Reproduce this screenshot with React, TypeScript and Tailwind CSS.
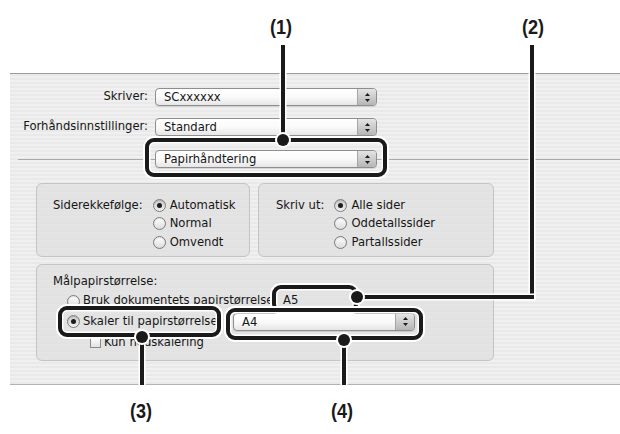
import React from "react";

const Arrows = () => (
  <svg width="7" height="11" viewBox="0 0 7 11">
    <path d="M3.5 1 L6 4 L1 4 Z" fill="#1a1a1a" />
    <path d="M1 7 L6 7 L3.5 10 Z" fill="#1a1a1a" />
  </svg>
);

const Popup = ({ label, className }: { label: string; className: string }) => (
  <div
    className={`flex h-[18px] overflow-hidden rounded-[4px] border border-[#8e8e8e] bg-gradient-to-b from-white via-[#fafafa] to-[#e6e6e6] shadow-[0_1px_0_rgba(0,0,0,0.1)] ${className}`}
  >
    <span className="flex-1 pl-[8px] leading-[16px]">{label}</span>
    <span className="flex w-[19px] items-center justify-center border-l border-[#a6a6a6] bg-gradient-to-b from-[#e4e4e4] to-[#b6b6b6]">
      <Arrows />
    </span>
  </div>
);

const Radio = ({ on = false }: { on?: boolean }) => (
  <span
    className={`flex h-[13px] w-[13px] shrink-0 items-center justify-center rounded-full border border-[#7c7c7c] shadow-[inset_0_1px_1px_rgba(0,0,0,0.12)] ${
      on ? "bg-gradient-to-b from-[#c9c9c9] to-[#f2f2f2]" : "bg-gradient-to-b from-white to-[#dcdcdc]"
    }`}
  >
    {on && <span className="h-[5px] w-[5px] rounded-full bg-[#1c1c1c]" />}
  </span>
);

const Option = ({ label, on }: { label: string; on?: boolean }) => (
  <div className="flex h-[18.5px] items-center gap-[4px]">
    <Radio on={on} />
    <span>{label}</span>
  </div>
);

const Callout = ({ className }: { className: string }) => (
  <div
    className={`absolute rounded-[9px] border-[4px] border-[#1a1a1a] shadow-[0_0_0_2px_#fff,inset_0_0_0_1.5px_#fff] ${className}`}
  />
);

const Line = ({ className }: { className: string }) => (
  <div className={`absolute bg-[#1a1a1a] shadow-[0_0_0_1.5px_#fff] ${className}`} />
);

const Dot = ({ className }: { className: string }) => (
  <div
    className={`absolute h-[12px] w-[12px] -translate-x-1/2 -translate-y-1/2 rounded-full bg-[#1a1a1a] shadow-[0_0_0_2px_#fff] ${className}`}
  />
);

const Tag = ({ text, className }: { text: string; className: string }) => (
  <div
    className={`absolute -translate-x-1/2 scale-x-[0.86] font-['Liberation_Sans',Arial,sans-serif] text-[21px] font-bold leading-[22px] text-[#1a1a1a] ${className}`}
  >
    {text}
  </div>
);

export default function App() {
  return (
    <div className="relative h-[434px] w-[620px] overflow-hidden bg-white font-['DejaVu_Sans',sans-serif] text-[11.6px] text-[#161616]">
      <div className="pt-[73px]">
        <div className="ml-[10px] h-[312px] border-t border-b border-t-[#9c9c9c] border-b-[#b2b2b2] bg-[repeating-linear-gradient(0deg,#e9e9e9_0px,#e9e9e9_2px,#f0f0f0_2px,#f0f0f0_4px)]">
          <div className="mt-[14px] flex h-[18px] items-center">
            <span className="w-[138px] text-right">Skriver:</span>
            <Popup label="SCxxxxxx" className="ml-[7px] w-[222px]" />
          </div>
          <div className="mt-[12px] flex h-[18px] items-center">
            <span className="w-[138px] text-right">Forhåndsinnstillinger:</span>
            <Popup label="Standard" className="ml-[7px] w-[222px]" />
          </div>
          <div className="mt-[14px] flex h-[18px] items-center">
            <div className="ml-[8px] h-px w-[137px] bg-[#a9a9a9]" />
            <Popup label="Papirhåndtering" className="w-[222px]" />
            <div className="h-px flex-1 bg-[#a9a9a9]" />
          </div>

          <div className="ml-[26px] mt-[15px] flex gap-[8px]">
            <div className="flex h-[74px] w-[214px] rounded-[6px] border border-[#c4c4c4] bg-[#dedede]/70 pl-[16px] pt-[12px]">
              <span className="h-[18.5px] leading-[18.5px]">Siderekkefølge:</span>
              <div className="ml-[10px] flex flex-col">
                <Option label="Automatisk" on />
                <Option label="Normal" />
                <Option label="Omvendt" />
              </div>
            </div>
            <div className="flex h-[74px] w-[236px] rounded-[6px] border border-[#c4c4c4] bg-[#dedede]/70 pl-[17px] pt-[12px]">
              <span className="h-[18.5px] leading-[18.5px]">Skriv ut:</span>
              <div className="ml-[10px] flex flex-col">
                <Option label="Alle sider" on />
                <Option label="Oddetallssider" />
                <Option label="Partallssider" />
              </div>
            </div>
          </div>

          <div className="ml-[26px] mt-[7px] h-[97px] w-[458px] rounded-[6px] border border-[#c4c4c4] bg-[#dedede]/70 pt-[8px]">
            <div className="flex h-[18px] items-center pl-[16px]">Målpapirstørrelse:</div>
            <div className="flex h-[20px] items-center pl-[30px]">
              <Radio />
              <span className="ml-[3px] w-[200px] whitespace-nowrap">Bruk dokumentets papirstørrelse:</span>
              <span>A5</span>
            </div>
            <div className="flex h-[21px] items-center pl-[30px]">
              <Radio on />
              <span className="ml-[3px] w-[150px] whitespace-nowrap">Skaler til papirstørrelse:</span>
              <Popup label="A4" className="h-[17px] w-[182px]" />
            </div>
            <div className="flex h-[21px] items-center gap-[3px] pl-[53px]">
              <span className="h-[11px] w-[11px] border border-[#8a8a8a] bg-gradient-to-b from-white to-[#e2e2e2]" />
              <span>Kun nedskalering</span>
            </div>
          </div>
        </div>
      </div>

      <Callout className="left-[145px] top-[138px] h-[39px] w-[242px]" />
      <Callout className="left-[272px] top-[285px] h-[28px] w-[86px]" />
      <Callout className="left-[58px] top-[306px] h-[31px] w-[163px]" />
      <Callout className="left-[226px] top-[308px] h-[32px] w-[197px]" />

      <Line className="left-[281px] top-[45px] h-[95px] w-[4px]" />
      <Line className="left-[530px] top-[45px] h-[254px] w-[4px]" />
      <Line className="left-[356px] top-[295px] h-[4px] w-[178px]" />
      <Line className="left-[140px] top-[337px] h-[48px] w-[4px]" />
      <Line className="left-[342px] top-[340px] h-[45px] w-[4px]" />

      <Dot className="left-[283px] top-[140px]" />
      <Dot className="left-[357px] top-[297px]" />
      <Dot className="left-[142px] top-[337px]" />
      <Dot className="left-[344px] top-[340px]" />

      <Tag text="(1)" className="left-[281px] top-[16px]" />
      <Tag text="(2)" className="left-[533px] top-[16px]" />
      <Tag text="(3)" className="left-[141px] top-[400px]" />
      <Tag text="(4)" className="left-[342px] top-[400px]" />
    </div>
  );
}
